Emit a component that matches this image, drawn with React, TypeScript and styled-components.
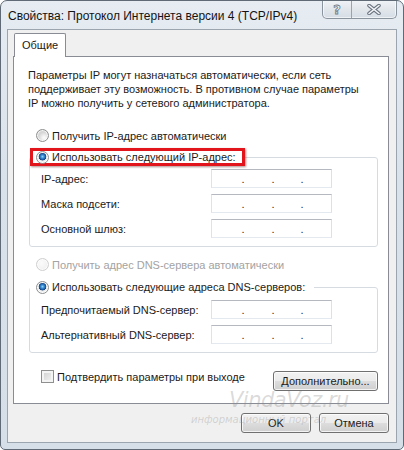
import React from 'react';
import styled, { createGlobalStyle } from 'styled-components';

const GlobalStyle = createGlobalStyle`
  html, body {
    margin: 0;
    padding: 0;
    background: #ffffff;
  }
  body {
    font-family: "Liberation Sans", Arial, sans-serif;
    font-size: 11px;
    color: #1b1b1b;
  }
  * {
    box-sizing: border-box;
  }
`;

type IpField = { label: string };

const ipFields: IpField[] = [
  { label: 'IP-адрес:' },
  { label: 'Маска подсети:' },
  { label: 'Основной шлюз:' },
];

const dnsFields: IpField[] = [
  { label: 'Предпочитаемый DNS-сервер:' },
  { label: 'Альтернативный DNS-сервер:' },
];

const IpBox: React.FC = () => (
  <IpInput>
    <span />
    <Dot>.</Dot>
    <span />
    <Dot>.</Dot>
    <span />
    <Dot>.</Dot>
    <span />
  </IpInput>
);

const App: React.FC = () => {
  return (
    <>
      <GlobalStyle />
      <Window>
        <TitleBar>
          <TitleText>Свойства: Протокол Интернета версии 4 (TCP/IPv4)</TitleText>
          <CaptionGroup>
            <CaptionButton $width={28}>
              <HelpGlyph>?</HelpGlyph>
            </CaptionButton>
            <CaptionButton $width={46} $divider>
              <svg width="14" height="11" viewBox="0 0 14 11">
                <path d="M2 1.5 L12 9.5 M12 1.5 L2 9.5" stroke="#6c7580" strokeWidth="3.6" strokeLinecap="round" fill="none" />
                <path d="M2 1.5 L12 9.5 M12 1.5 L2 9.5" stroke="#f3f5f8" strokeWidth="1.6" strokeLinecap="round" fill="none" />
              </svg>
            </CaptionButton>
          </CaptionGroup>
        </TitleBar>

        <Client>
          <TabStrip>
            <Tab>Общие</Tab>
          </TabStrip>

          <TabPanel>
            <Intro>
              Параметры IP могут назначаться автоматически, если сеть
              <br />
              поддерживает эту возможность. В противном случае параметры
              <br />
              IP можно получить у сетевого администратора.
            </Intro>

            <RadioRow $top={18}>
              <Radio />
              Получить IP-адрес автоматически
            </RadioRow>

            <Group $top={5}>
              <Legend>
                <LegendInner $highlight>
                  <Radio $checked />
                  Использовать следующий IP-адрес:
                </LegendInner>
              </Legend>
              <FieldGrid $padTop={3}>
                {ipFields.map(f => (
                  <React.Fragment key={f.label}>
                    <FieldLabel>{f.label}</FieldLabel>
                    <IpBox />
                  </React.Fragment>
                ))}
              </FieldGrid>
            </Group>

            <RadioRow $top={10} $disabled>
              <Radio $disabled />
              Получить адрес DNS-сервера автоматически
            </RadioRow>

            <Group $top={6}>
              <Legend>
                <LegendInner>
                  <Radio $checked />
                  Использовать следующие адреса DNS-серверов:
                </LegendInner>
              </Legend>
              <FieldGrid $padTop={4}>
                {dnsFields.map(f => (
                  <React.Fragment key={f.label}>
                    <FieldLabel>{f.label}</FieldLabel>
                    <IpBox />
                  </React.Fragment>
                ))}
              </FieldGrid>
            </Group>

            <BottomRow>
              <CheckLabel>
                <Checkbox />
                Подтвердить параметры при выходе
              </CheckLabel>
              <Button $width={105} $top={1}>Дополнительно...</Button>
            </BottomRow>
          </TabPanel>

          <Footer>
            <Button $width={70}>OK</Button>
            <Button $width={70}>Отмена</Button>
          </Footer>
        </Client>

        <Watermark>
          <WatermarkTitle>VindaVoz.ru</WatermarkTitle>
          <WatermarkSub>информационный портал</WatermarkSub>
        </Watermark>
      </Window>
    </>
  );
};

export default App;

// ==================== Styled Components ====================
const Window = styled.div`
  position: relative;
  width: 404px;
  height: 450px;
  display: flex;
  flex-direction: column;
  padding: 0 6px 6px 6px;
  border: 1px solid #5f6a76;
  border-radius: 7px 7px 5px 5px;
  background: linear-gradient(#e6ecf2, #d9e1ea 40%, #d6dee8);
  overflow: hidden;
`;

const TitleBar = styled.div`
  height: 28px;
  flex: none;
  display: flex;
  align-items: flex-start;
`;

const TitleText = styled.div`
  align-self: center;
  padding-left: 1px;
  margin-top: 1px;
  font-size: 12px;
  color: #141414;
  white-space: nowrap;
`;

const CaptionGroup = styled.div`
  margin-left: auto;
  margin-top: -1px;
  display: flex;
  height: 19px;
  border: 1px solid #8a949f;
  border-top: none;
  border-radius: 0 0 5px 5px;
  overflow: hidden;
  background: linear-gradient(#f1f4f7, #e2e7ec 50%, #d6dde5);
  box-shadow: inset 0 0 0 1px rgba(255, 255, 255, 0.6);
`;

const CaptionButton = styled.div<{ $width: number; $divider?: boolean }>`
  width: ${p => p.$width - (p.$divider ? 1 : 0)}px;
  display: flex;
  align-items: center;
  justify-content: center;
  border-left: ${p => (p.$divider ? '1px solid #9ba4ae' : 'none')};
`;

const HelpGlyph = styled.span`
  font-family: "DejaVu Sans", sans-serif;
  font-size: 13px;
  font-weight: bold;
  line-height: 1;
  color: #f3f5f8;
  -webkit-text-stroke: 0.8px #6f7883;
`;

const Client = styled.div`
  flex: 1;
  display: flex;
  flex-direction: column;
  border: 1px solid #9ba5b0;
  background: #f0f0f0;
  padding: 3px 7px 8px 5px;
`;

const TabStrip = styled.div`
  display: flex;
  height: 23px;
  padding-left: 1px;
`;

const Tab = styled.div`
  position: relative;
  z-index: 1;
  height: 24px;
  padding: 0 7px;
  line-height: 22px;
  background: #ffffff;
  border: 1px solid #898c95;
  border-bottom: none;
  border-radius: 2px 2px 0 0;
`;

const TabPanel = styled.div`
  flex: none;
  background: #ffffff;
  border: 1px solid #898c95;
  padding: 11px 10px 12px 15px;
`;

const Intro = styled.p`
  margin: 0 0 0 -1px;
  line-height: 14px;
  white-space: nowrap;
`;

const RadioRow = styled.div<{ $top: number; $disabled?: boolean }>`
  display: flex;
  align-items: center;
  gap: 3px;
  height: 15px;
  margin-top: ${p => p.$top}px;
  padding-left: 7px;
  color: ${p => (p.$disabled ? '#a3a3a3' : 'inherit')};
`;

const Radio = styled.span<{ $checked?: boolean; $disabled?: boolean }>`
  flex: none;
  width: 13px;
  height: 13px;
  border-radius: 50%;
  border: 1px solid ${p => (p.$disabled ? '#cfcfcf' : '#8d8e8f')};
  background: ${p =>
    p.$checked
      ? 'radial-gradient(circle at 50% 42%, #8fd6f7 0, #3a8fd6 1.6px, #1d5aa3 3px, #17437d 3.6px, #e9e9e9 4.1px, #f7f7f7 6px)'
      : p.$disabled
      ? 'radial-gradient(circle at 40% 35%, #fbfbfb, #ececec)'
      : 'radial-gradient(circle at 65% 70%, #fdfdfd 0, #f1f1f1 2px, #d6d6d6 5.5px)'};
  box-shadow: inset 0 0 0 1px rgba(255, 255, 255, 0.7);
`;

const Group = styled.fieldset<{ $top: number }>`
  margin: ${p => p.$top}px 0 0 0;
  padding: 0 0 8px 0;
  min-width: 0;
  border: 1px solid #d5dbe0;
  border-radius: 3px;
`;

const Legend = styled.legend`
  padding: 0;
  margin: 0;
`;

const LegendInner = styled.span<{ $highlight?: boolean }>`
  display: flex;
  align-items: center;
  gap: 3px;
  height: 18px;
  padding: 0 6px 0 3px;
  border: 3px solid ${p => (p.$highlight ? '#e2141c' : 'transparent')};
  box-shadow: ${p => (p.$highlight ? '1px 1px 2px rgba(80, 0, 0, 0.45)' : 'none')};
  line-height: 12px;
  white-space: nowrap;
`;

const FieldGrid = styled.div<{ $padTop: number }>`
  display: grid;
  grid-template-columns: 170px 121px;
  row-gap: 6px;
  padding: ${p => p.$padTop}px 0 0 11px;
  align-items: center;
`;

const FieldLabel = styled.span`
  white-space: nowrap;
`;

const IpInput = styled.div`
  height: 19px;
  display: grid;
  grid-template-columns: 29px 4px 26px 4px 25px 4px 1fr;
  align-items: center;
  background: #ffffff;
  border: 1px solid;
  border-color: #b5b8bf #dde1e7 #e3e9ef #dfe2e8;
`;

const Dot = styled.span`
  text-align: center;
  font-size: 11px;
  line-height: 1;
  color: #2a2a2a;
  margin-top: 2px;
`;

const BottomRow = styled.div`
  display: flex;
  align-items: flex-start;
  justify-content: space-between;
  margin-top: 17px;
  padding-left: 12px;
`;

const CheckLabel = styled.div`
  display: flex;
  align-items: center;
  gap: 3px;
  height: 13px;
  white-space: nowrap;
`;

const Checkbox = styled.span`
  flex: none;
  width: 13px;
  height: 13px;
  border: 1px solid #8e8f8f;
  background: linear-gradient(135deg, #cdcdcd, #f6f6f6);
  box-shadow: inset 0 0 0 2px #f4f4f4;
`;

const Button = styled.button<{ $width: number; $top?: number }>`
  width: ${p => p.$width}px;
  height: 20px;
  margin-top: ${p => p.$top ?? 0}px;
  padding: 0;
  font-family: inherit;
  font-size: 11px;
  color: #1b1b1b;
  border: 1px solid #707070;
  border-radius: 3px;
  background: linear-gradient(#f2f2f2 0%, #ebebeb 50%, #dddddd 51%, #cfcfcf 100%);
  box-shadow: inset 0 0 0 1px rgba(255, 255, 255, 0.75);
`;

const Footer = styled.div`
  display: flex;
  justify-content: flex-end;
  gap: 8px;
  margin-top: 9px;
`;

const Watermark = styled.div`
  position: absolute;
  left: 190px;
  top: 388px;
  width: 200px;
  pointer-events: none;
  color: rgba(140, 140, 140, 0.32);
  font-style: italic;
  font-family: "DejaVu Sans", sans-serif;
`;

const WatermarkTitle = styled.div`
  padding-left: 38px;
  font-size: 21px;
  line-height: 22px;
  letter-spacing: -0.5px;
`;

const WatermarkSub = styled.div`
  font-size: 10px;
  line-height: 12px;
  margin-top: 3px;
`;
